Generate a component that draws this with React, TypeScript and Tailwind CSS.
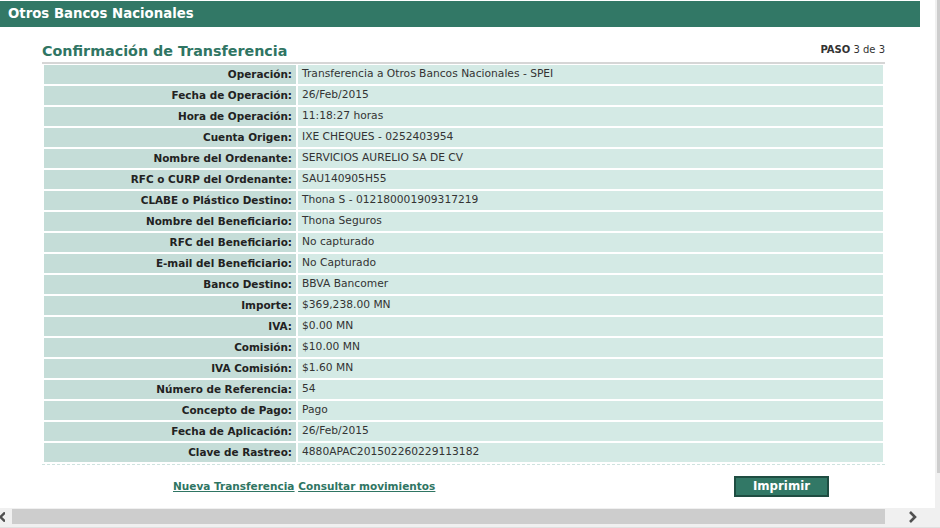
const rows: [string, string][] = [
  ["Operación:", "Transferencia a Otros Bancos Nacionales - SPEI"],
  ["Fecha de Operación:", "26/Feb/2015"],
  ["Hora de Operación:", "11:18:27 horas"],
  ["Cuenta Origen:", "IXE CHEQUES - 0252403954"],
  ["Nombre del Ordenante:", "SERVICIOS AURELIO SA DE CV"],
  ["RFC o CURP del Ordenante:", "SAU140905H55"],
  ["CLABE o Plástico Destino:", "Thona S - 012180001909317219"],
  ["Nombre del Beneficiario:", "Thona Seguros"],
  ["RFC del Beneficiario:", "No capturado"],
  ["E-mail del Beneficiario:", "No Capturado"],
  ["Banco Destino:", "BBVA Bancomer"],
  ["Importe:", "$369,238.00 MN"],
  ["IVA:", "$0.00 MN"],
  ["Comisión:", "$10.00 MN"],
  ["IVA Comisión:", "$1.60 MN"],
  ["Número de Referencia:", "54"],
  ["Concepto de Pago:", "Pago"],
  ["Fecha de Aplicación:", "26/Feb/2015"],
  ["Clave de Rastreo:", "4880APAC201502260229113182"],
];

export default function App() {
  return (
    <div className="flex h-[528px] w-[940px] flex-col overflow-hidden bg-white font-['DejaVu_Sans',Verdana,sans-serif] text-[#333]">
      <div className="flex min-h-0 flex-1">
        {/* page body */}
        <div className="w-[935px] pt-px">
          <div className="flex h-[26px] w-[920px] items-center bg-[#327866] pl-[8px] text-[13.3px] font-bold text-white">
            Otros Bancos Nacionales
          </div>

          <div className="ml-[42px] mt-[15px] w-[843px]">
            <div className="flex items-end justify-between border-b-2 border-[#d6d6d6] pb-[2px]">
              <h1 className="text-[14.3px] font-bold leading-[18px] text-[#2f7563]">Confirmación de Transferencia</h1>
              <div className="mb-[3px] text-[10px]">
                <span className="font-bold">PASO</span> 3 de 3
              </div>
            </div>

            <div className="border-b border-dashed border-[#cfe3df] px-[2px] pb-[2px] pt-[1px]">
              <div className="grid grid-cols-[252px_1fr] gap-[2px]">
                {rows.map(([k, v]) => (
                  <div key={k} className="contents">
                    <div className="flex h-[19px] items-center justify-end bg-[#c5ddd8] pr-[4px] text-[10.45px] font-bold text-[#222]">{k}</div>
                    <div className="flex h-[19px] items-center bg-[#d4eae5] pl-[4px] text-[10.7px] text-[#333]">{v}</div>
                  </div>
                ))}
              </div>
            </div>

            <div className="mt-[11px] flex items-center">
              <div className="ml-[131px] flex gap-[4px] text-[10.5px] font-bold text-[#2f7563] underline">
                <a href="#">Nueva Transferencia</a>
                <a href="#">Consultar movimientos</a>
              </div>
              <button className="ml-auto mr-[56px] h-[21px] w-[95px] border-2 border-[#1f4d42] bg-[#327866] text-[11.8px] font-bold text-white">
                Imprimir
              </button>
            </div>
          </div>
        </div>
        {/* vertical scrollbar (clipped) */}
        <div className="flex w-[5px] flex-col bg-[#f0f0f0] pl-[2px]">
          <div className="h-[473px] bg-[#cdcdcd]" />
        </div>
      </div>
      {/* horizontal scrollbar */}
      <div className="flex h-[20px] items-start border-b border-[#e0e0e0] bg-[#f0f0f0]">
        <div className="flex h-[17px] w-[12px] items-center">
          <svg width="5" height="10" viewBox="0 0 5 10">
            <path d="M5 0.5 L0.5 5 L5 9.5" fill="none" stroke="#505050" strokeWidth="2.4" />
          </svg>
        </div>
        <div className="mt-px h-[15px] w-[873px] bg-[#cdcdcd]" />
        <div className="flex h-[17px] w-[55px] items-center justify-center">
          <svg width="10" height="12" viewBox="0 0 10 12">
            <path d="M2 1 L7 6 L2 11" fill="none" stroke="#505050" strokeWidth="2.6" />
          </svg>
        </div>
      </div>
    </div>
  );
}
